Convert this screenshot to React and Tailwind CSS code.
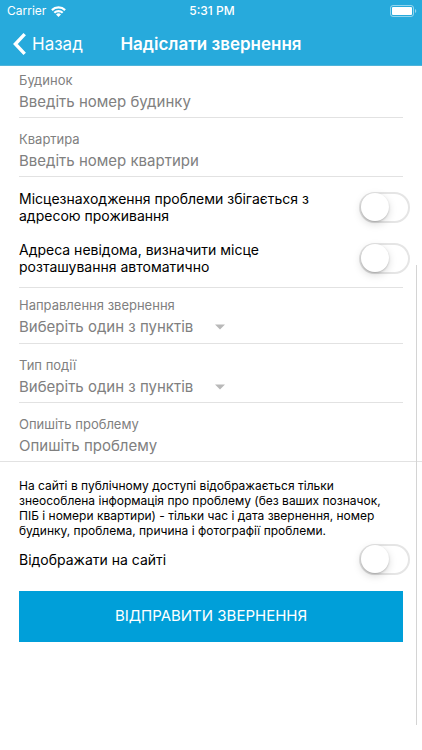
import React, { useState } from "react";


function StatusBar() {
    return(
        <div className="grid grid-cols-3 items-center h-[22px] pl-[7px] pr-[5px] text-[12px] leading-[22px]">

            <div className="flex items-center gap-[5px]">
                <span>Carrier</span>
                <svg className="w-[15px] h-[11px]" viewBox="0 0 15 11" fill="none" stroke="currentColor" strokeWidth="2.2">
                    <path d="M0.9 4.1 A9.4 9.4 0 0 1 14.1 4.1" />
                    <path d="M3.3 6.8 A6 6 0 0 1 11.7 6.8" />
                    <path d="M7.5 11 L5 8.5 A3.5 3.5 0 0 1 10 8.5 Z" fill="currentColor" stroke="none" />
                </svg>
            </div>

            <span className="text-center font-medium">5:31 PM</span>

            <svg className="w-[27px] h-[12px] justify-self-end" viewBox="0 0 27 12">
                <rect x="0.5" y="0.5" width="23" height="11" rx="2.5" fill="none" stroke="white" strokeOpacity="0.5" />
                <rect x="2" y="2" width="20" height="8" rx="1" fill="white" />
                <path d="M25 4 A2.2 2.2 0 0 1 25 8 Z" fill="white" fillOpacity="0.5" />
            </svg>

        </div>
    );
}


function Header() {
    return(
        <header className="bg-[#27aadc] text-white border-b border-[#4fb4da]">

            <StatusBar/>

            <div className="grid grid-cols-[1fr_auto_1fr] items-center h-[43px] px-[13px]">
                <button type="button" className="flex items-center gap-[6px] justify-self-start text-[17px] leading-[22px]">
                    <svg className="w-[13px] h-[22px]" viewBox="0 0 13 22" fill="none" stroke="currentColor" strokeWidth="3.4">
                        <path d="M11.7 1.2 L2.4 11 L11.7 20.8" />
                    </svg>
                    Назад
                </button>
                <h1 className="text-[17px] leading-[22px] font-semibold">Надіслати звернення</h1>
            </div>

        </header>
    );
}


function TextField({ id, label, placeholder, className }) {

    const[value , setValue] = useState('');

    return(
        <div className={className}>
            <label htmlFor={id} className="block text-[13px] leading-[16px] mb-1">{label}</label>
            <input id={id} value={value} placeholder={placeholder} className="block w-full h-5 text-[15px] leading-[20px] outline-none placeholder:text-[#808080]" onChange={(e) => setValue(e.target.value)}></input>
        </div>
    );
}


function SelectField({ id, label, className }) {
    return(
        <div className={className}>
            <label htmlFor={id} className="block text-[13px] leading-[16px] mb-1">{label}</label>
            <div className="flex items-center">
                <select id={id} className="appearance-none h-5 w-[196px] text-[15px] leading-[20px] bg-transparent outline-none">
                    <option>Виберіть один з пунктів</option>
                </select>
                <svg className="w-[10px] h-[6px] pointer-events-none" viewBox="0 0 10 6">
                    <path d="M0 0.5 H10 L5 5.5 Z" fill="#b9b9b9" />
                </svg>
            </div>
        </div>
    );
}


function Toggle({ id, label }) {

    const[checked , setChecked] = useState(false);

    return(
        <div className="flex items-center justify-between pl-[19px] pr-3">
            <label htmlFor={id} className="w-[300px] text-[14px] leading-[17px] text-black">{label}</label>
            <input
                id={id}
                type="checkbox"
                role="switch"
                checked={checked}
                className="appearance-none shrink-0 w-[51px] h-[31px] rounded-full border-2 border-[#e5e5e5] bg-white checked:bg-[#4cd964] checked:border-[#4cd964] before:block before:size-[28px] before:-mt-px before:rounded-full before:bg-white before:shadow-[0_3px_8px_rgba(0,0,0,0.15),0_1px_2px_rgba(0,0,0,0.2)] checked:before:ml-5"
                onChange={(e) => setChecked(e.target.checked)}
            />
        </div>
    );
}


function App() {

    const handleSubmit = (e) => {
        e.preventDefault();
    };

    return(
        <div className="relative min-h-screen bg-white text-[#808080] font-['Inter','Noto_Sans',sans-serif]">

        <Header/>

        <form onSubmit={handleSubmit}>

            <div className="mx-[19px]">
                <TextField id="building" label="Будинок" placeholder="Введіть номер будинку" className="pt-[6px] pb-[5px] border-b border-[#e2e2e2]" />
                <TextField id="flat" label="Квартира" placeholder="Введіть номер квартири" className="pt-[13px] pb-[5px] border-b border-[#e2e2e2]" />
            </div>

            <div className="flex flex-col gap-[17px] pt-[13px] pb-3">
                <Toggle id="sameAddress" label="Місцезнаходження проблеми збігається з адресою проживання" />
                <Toggle id="autoLocation" label="Адреса невідома, визначити місце розташування автоматично" />
            </div>

            <div className="mx-[19px] border-t border-[#e2e2e2]">
                <SelectField id="direction" label="Направлення звернення" className="pt-[9px] pb-[6px] border-b border-[#e2e2e2]" />
                <SelectField id="eventType" label="Тип події" className="pt-[13px] pb-[5px] border-b border-[#e2e2e2]" />
            </div>

            <TextField id="problem" label="Опишіть проблему" placeholder="Опишіть проблему" className="px-[19px] pt-[13px] pb-[5px] border-b border-[#e2e2e2]" />

            <p className="px-[19px] pt-4 pb-[6px] text-[12px] leading-[15px] text-black">
                На сайті в публічному доступі відображається тільки знеособлена інформація про проблему (без ваших позначок, ПІБ і номери квартири) - тільки час і дата звернення, номер будинку, проблема, причина і фотографії проблеми.
            </p>

            <Toggle id="showOnSite" label="Відображати на сайті" />

            <div className="px-[19px] pt-4">
                <button type="submit" className="w-full h-[51px] bg-[#009fd9] text-white text-[15px]">ВІДПРАВИТИ ЗВЕРНЕННЯ</button>
            </div>

        </form>

        {/* scroll indicator */}
        <div className="absolute right-[5px] top-[265px] bottom-[25px] w-px bg-[#d4d4d4]"></div>

        </div>
    );

};

export default App;
